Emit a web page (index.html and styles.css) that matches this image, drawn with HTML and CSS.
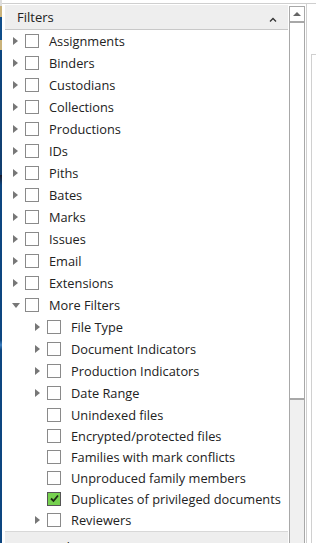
FILE: index.html
```html
<!DOCTYPE html>
<html lang="en">
<head>
    <meta charset="UTF-8">
    <title>Filters</title>
    <link rel="stylesheet" href="styles.css">
</head>
<body>
    <div class="frame">
        <div class="strip"></div>
        <div class="main">
            <div class="topline"></div>
            <div class="content">
                <div class="tree">
                    <div class="panel-head">
                        <span>Filters</span>
                        <svg class="caret" width="8" height="5" viewBox="0 0 8 5"><path d="M1 4.5 L4 1.5 L7 4.5" fill="none" stroke="#333" stroke-width="1.3"/></svg>
                    </div>
                    <ul class="nodes">
                        <li class="node"><span class="tog"></span><span class="box"></span><span class="label">Assignments</span></li>
                        <li class="node"><span class="tog"></span><span class="box"></span><span class="label">Binders</span></li>
                        <li class="node"><span class="tog"></span><span class="box"></span><span class="label">Custodians</span></li>
                        <li class="node"><span class="tog"></span><span class="box"></span><span class="label">Collections</span></li>
                        <li class="node"><span class="tog"></span><span class="box"></span><span class="label">Productions</span></li>
                        <li class="node"><span class="tog"></span><span class="box"></span><span class="label">IDs</span></li>
                        <li class="node"><span class="tog"></span><span class="box"></span><span class="label">Piths</span></li>
                        <li class="node"><span class="tog"></span><span class="box"></span><span class="label">Bates</span></li>
                        <li class="node"><span class="tog"></span><span class="box"></span><span class="label">Marks</span></li>
                        <li class="node"><span class="tog"></span><span class="box"></span><span class="label">Issues</span></li>
                        <li class="node"><span class="tog"></span><span class="box"></span><span class="label">Email</span></li>
                        <li class="node"><span class="tog"></span><span class="box"></span><span class="label">Extensions</span></li>
                        <li class="node"><span class="tog open"></span><span class="box"></span><span class="label">More Filters</span></li>
                        <li class="node sub"><span class="tog"></span><span class="box"></span><span class="label">File Type</span></li>
                        <li class="node sub"><span class="tog"></span><span class="box"></span><span class="label">Document Indicators</span></li>
                        <li class="node sub"><span class="tog"></span><span class="box"></span><span class="label">Production Indicators</span></li>
                        <li class="node sub"><span class="tog"></span><span class="box"></span><span class="label">Date Range</span></li>
                        <li class="node sub leaf"><span class="tog none"></span><span class="box"></span><span class="label">Unindexed files</span></li>
                        <li class="node sub leaf"><span class="tog none"></span><span class="box"></span><span class="label">Encrypted/protected files</span></li>
                        <li class="node sub leaf"><span class="tog none"></span><span class="box"></span><span class="label">Families with mark conflicts</span></li>
                        <li class="node sub leaf"><span class="tog none"></span><span class="box"></span><span class="label">Unproduced family members</span></li>
                        <li class="node sub leaf"><span class="tog none"></span><span class="box checked"><svg width="11" height="11" viewBox="0 0 11 11"><path d="M2 5.5 L4.5 8 L9 2.5" fill="none" stroke="#1d2a14" stroke-width="1.8"/></svg></span><span class="label">Duplicates of privileged documents</span></li>
                        <li class="node sub"><span class="tog"></span><span class="box"></span><span class="label">Reviewers</span></li>
                    </ul>
                    <div class="panel-head next"><span>Keywords</span></div>
                </div>
                <div class="scroll">
                    <div class="scroll-btn"></div>
                    <div class="scroll-thumb"></div>
                </div>
                <div class="side"><div class="side-inner"></div></div>
            </div>
        </div>
    </div>
</body>
</html>
```

FILE: styles.css
```css
html, body {
    margin: 0;
    padding: 0;
    background: #fff;
    height: 543px;
    overflow: hidden;
}
body {
    font-family: "Open Sans", "Noto Sans", Arial, sans-serif;
    font-size: 12.8px;
    color: #222;
}
.frame {
    display: flex;
    height: 543px;
}
.strip {
    width: 2px;
    flex: none;
    background: linear-gradient(to bottom,
        #ddd 0, #ddd 6px,
        #c9b27a 6px, #c9b27a 17px,
        #0f4d8a 17px, #0f4d8a 40px,
        #c9b27a 40px, #c9b27a 50px,
        #0d4680 50px, #123e6e 175px,
        #1a1a2a 175px, #0d4680 185px,
        #0d4680 340px, #3d7fc0 345px,
        #0d4680 350px, #0d4680 540px);
}
.main {
    flex: 1;
    display: flex;
    flex-direction: column;
    min-height: 0;
}
.topline {
    flex: none;
    height: 3px;
    border-bottom: 1px solid #cfcfcf;
}
.content {
    flex: none;
    display: flex;
    align-items: flex-start;
}
.tree {
    flex: none;
    width: 283px;
    margin-left: 3px;
    margin-top: 1px;
}
.panel-head {
    box-sizing: border-box;
    height: 25px;
    background: #eeeeee;
    border-bottom: 1px solid #c8c8c8;
    display: flex;
    align-items: center;
    justify-content: space-between;
    padding: 0 11px 0 12px;
    font-size: 13px;
    color: #222;
}
.panel-head.next {
    border-bottom: none;
    border-top: 1px solid #d8d8d8;
    align-items: flex-start;
    padding-top: 6px;
}
.caret {
    margin-top: 4px;
}
.nodes {
    list-style: none;
    margin: 0;
    padding: 0;
}
.node {
    height: 22px;
    display: flex;
    align-items: center;
    padding-left: 7px;
    white-space: nowrap;
}
.node.sub {
    padding-left: 29px;
}
.node.leaf {
    height: 21px;
}
.tog {
    width: 13px;
    height: 8px;
    position: relative;
}
.tog::before {
    content: "";
    position: absolute;
    left: 1px;
    top: 0;
    border-left: 5px solid #777;
    border-top: 4px solid transparent;
    border-bottom: 4px solid transparent;
}
.tog.open::before {
    left: 0;
    top: 2px;
    border-top: 5px solid #777;
    border-left: 4px solid transparent;
    border-right: 4px solid transparent;
    border-bottom: none;
}
.tog.none::before {
    display: none;
}
.box {
    width: 12px;
    height: 12px;
    border: 1px solid #8a8a8a;
    background: #fff;
    margin-right: 10px;
    display: flex;
    align-items: center;
    justify-content: center;
}
.box.checked {
    background: #76d14f;
    border-color: #555;
}
.scroll {
    flex: none;
    width: 14px;
    height: 541px;
    margin-left: 1px;
    margin-top: 2px;
    border-left: 1px solid #a8a8a8;
    border-right: 1px solid #a8a8a8;
    background: #f0f0f0;
}
.scroll-btn {
    height: 14px;
    border-top: 1px solid #a8a8a8;
    border-bottom: 2px solid #a8a8a8;
    background: #fff;
    position: relative;
}
.scroll-btn::before {
    content: "";
    position: absolute;
    left: 3px;
    top: 5px;
    border-bottom: 4px solid #666;
    border-left: 4px solid transparent;
    border-right: 4px solid transparent;
}
.scroll-thumb {
    height: 375px;
    background: #fff;
    border-bottom: 2px solid #a8a8a8;
}
.side {
    flex: 1;
    height: 543px;
    border-left: 1px solid #d0d0d0;
    margin-left: 1px;
    display: flex;
    justify-content: flex-end;
}
.side-inner {
    width: 4px;
    border-left: 1px solid #d0d0d0;
    margin-top: 50px;
    border-top: 1px solid #d0d0d0;
}
```
